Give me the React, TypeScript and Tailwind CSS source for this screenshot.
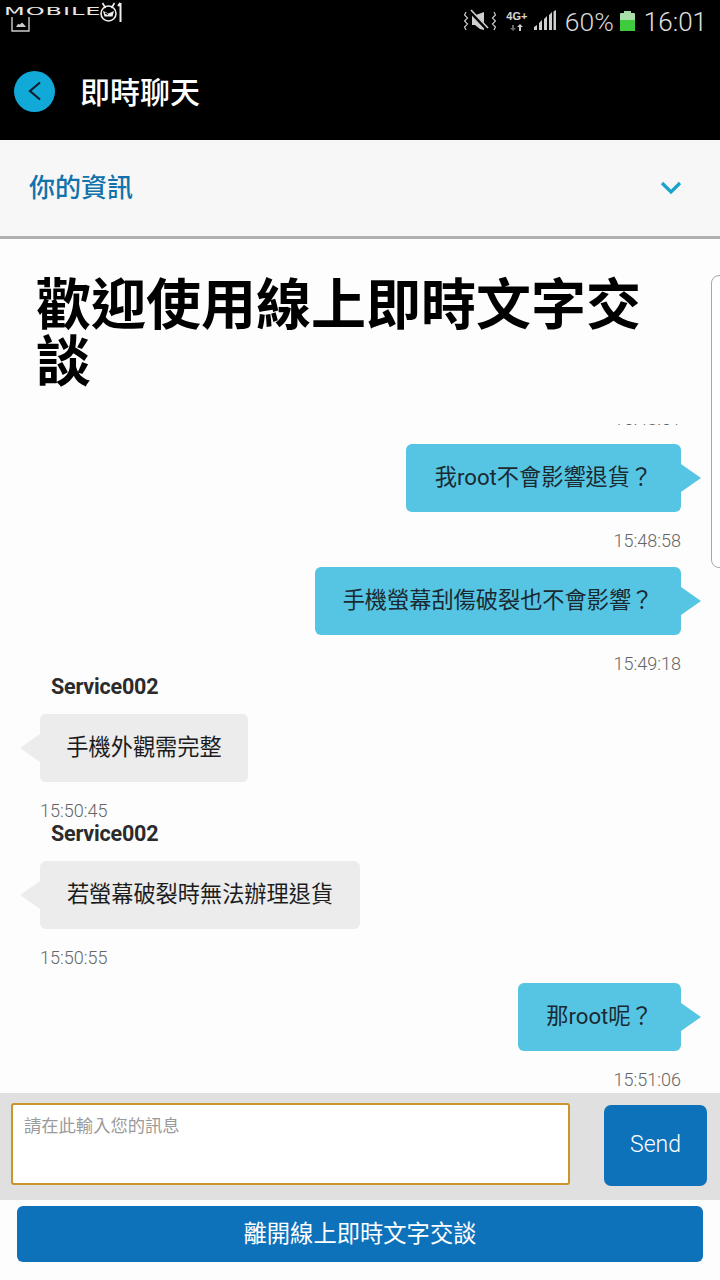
const FONT = "font-['Roboto','Noto_Sans_CJK_TC',sans-serif]";

function Time({ children, right }: { children: string; right?: boolean }) {
  return (
    <div className={`h-[18px] text-[18px] font-light leading-[18px] text-[#666666] ${right ? 'text-right' : 'text-left'}`}>
      {children}
    </div>
  );
}

function Mine({ text, width, time, gap }: { text: string; width: string; time: string; gap: string }) {
  return (
    <div className="pl-[40px] pr-[39px]">
      <div className="flex justify-end">
        <div className={`relative flex h-[68px] items-center justify-center rounded-[6px] bg-[#56c5e4] text-[22.2px] text-[#1a2a30] ${width}`}>
          {text}
          <div className="absolute left-full top-[20px] h-0 w-0 border-y-[14px] border-l-[20px] border-y-transparent border-l-[#56c5e4]" />
        </div>
      </div>
      <div className={`mt-[20px] ${gap}`}>
        <Time right>{time}</Time>
      </div>
    </div>
  );
}

function Theirs({ text, width, time, gap }: { text: string; width: string; time: string; gap: string }) {
  return (
    <div className="pl-[40px] pr-[39px]">
      <div className="ml-[11px] h-[22px] text-[21.5px] font-bold leading-[22px] tracking-[-0.2px] text-[#2b2b2b]">Service002</div>
      <div className={`relative mt-[16px] flex h-[68px] items-center justify-center rounded-[6px] bg-[#ececec] text-[22.2px] text-[#1c1c1c] ${width}`}>
        {text}
        <div className="absolute right-full top-[20px] h-0 w-0 border-y-[14px] border-r-[20px] border-y-transparent border-r-[#ececec]" />
      </div>
      <div className={`mt-[20px] ${gap}`}>
        <Time>{time}</Time>
      </div>
    </div>
  );
}

function StatusBar() {
  return (
    <div className="flex h-[44px] items-start justify-between pl-[4px] pr-[13px]">
      {/* logo */}
      <div className="flex flex-col items-start">
        <div className="flex items-start">
          <span className="mt-[6px] block w-[96px] origin-left scale-x-[2.4] font-['DejaVu_Sans',sans-serif] text-[10px] leading-[12px] tracking-[0.4px] text-[#e8e8e8]">MOBILE</span>
          <svg width="24" height="24" viewBox="0 0 24 24" className="mt-[1px]">
            <circle cx="8.500" cy="12.500" r="7.500" fill="none" stroke="#eee" strokeWidth="1.600" />
            <path d="M2.500 2l3 5M14.500 2l-3 5" stroke="#eee" strokeWidth="1.600" />
            <path d="M3 10l5.500 2.500L14 10l-1.500 5.500h-8z" fill="#eee" />
            <path d="M5 12l3 1.500" stroke="#000" strokeWidth="1.200" />
            <path d="M20.500 2v19M18 5l2.500-3" stroke="#eee" strokeWidth="2" fill="none" />
          </svg>
        </div>
        <svg width="20" height="15" viewBox="0 0 20 15" className="ml-[7px] -mt-[8px]">
          <path d="M1 0v14h17V0" fill="none" stroke="#ccc" strokeWidth="1.400" />
          <path d="M5 10l2-3 2 .5 2-2 2 2 2 2.500z" fill="#ccc" />
        </svg>
      </div>
      {/* status icons */}
      <div className="flex items-start text-[#d4d4d4]">
        <svg width="32" height="24" viewBox="0 0 32 24" className="mt-[9px]">
          <path d="M8 6h4l8-3v18l-4-1-5-4H8z" fill="#cfcfcf" />
          <path d="M7 3l17 18" stroke="#000" strokeWidth="3.500" />
          <path d="M7 1l17 18" stroke="#cfcfcf" strokeWidth="1.600" />
          <path d="M2 3L0.500 6l3 3-3 3 3 3-3 3L2 21M30 3l1.500 3-3 3 3 3-3 3 3 3L30 21" fill="none" stroke="#cfcfcf" strokeWidth="1.200" />
        </svg>
        <div className="ml-[9px] mt-[11px] flex w-[24px] flex-col items-center">
          <span className="font-['Liberation_Sans',sans-serif] text-[11px] font-bold leading-[11px] text-[#d8d8d8]">4G+</span>
          <svg width="14" height="8" viewBox="0 0 14 8" className="mt-[2px]">
            <path d="M3 7L0 4h2V1h2v3h2z" fill="#666" />
            <path d="M10 0l3 3h-2v4H9V3H7z" fill="#ccc" />
          </svg>
        </div>
        <svg width="24" height="22" viewBox="0 0 24 22" className="ml-[4px] mt-[9px]">
          <path d="M1 21v-3l3-2v5zM6 21v-7l3-3v10zM11 21V10l3-3v14zM16 21V6l3-3v18zM20.500 21V2.500L23 1v20z" fill="#cfcfcf" />
        </svg>
        <span className="ml-[8px] mt-[7px] text-[26.500px] font-light leading-[30px] text-[#d8d8d8]">60%</span>
        <div className="ml-[6px] mt-[11px] flex w-[15px] flex-col items-center">
          <div className="h-[2px] w-[7px] bg-[#a5dca5]" />
          <div className="flex h-[18px] w-[15px] flex-col rounded-[1px] bg-[#a9dfa9]">
            <div className="mt-[7px] flex-1 bg-[#3ecb3e]" />
          </div>
        </div>
        <span className="ml-[9px] mt-[7px] text-[26px] font-light leading-[30px] text-[#e0e0e0]">16:01</span>
      </div>
    </div>
  );
}

export default function App() {
  return (
    <div className={`relative flex h-[1280px] w-[720px] flex-col overflow-hidden bg-[#fdfdfd] ${FONT}`}>
      {/* top bar */}
      <div className="h-[140px] shrink-0 bg-black">
        <StatusBar />
        <div className="mt-[25px] flex items-center pl-[14px]">
          <div className="flex h-[41px] w-[41px] items-center justify-center rounded-full bg-[#11a9d8]">
            <svg width="18" height="24" viewBox="0 0 18 24">
              <path d="M14 3.500L4 12l10 8.500" fill="none" stroke="#10202a" strokeWidth="2.200" />
            </svg>
          </div>
          <span className="ml-[25px] mt-[3px] text-[30px] font-medium leading-[41px] text-white">即時聊天</span>
        </div>
      </div>

      {/* your info */}
      <div className="flex h-[99px] shrink-0 items-center justify-between border-b-[3px] border-[#b0b0b0] bg-[#f7f7f7] pb-[1px] pl-[29px] pr-[38px]">
        <span className="mt-[2px] text-[26px] font-medium text-[#1272ab]">你的資訊</span>
        <svg width="22" height="14" viewBox="0 0 22 14">
          <path d="M2 2l9 9 9-9" fill="none" stroke="#1aa3cc" strokeWidth="3.200" />
        </svg>
      </div>

      {/* heading */}
      <div className="h-[185px] shrink-0 pl-[36px] pr-[60px] pt-[38px]">
        <h1 className="text-[55px] font-bold leading-[57px] text-black">歡迎使用線上即時文字交談</h1>
      </div>

      {/* messages, pinned to the bottom like a scrolled log */}
      <div className="flex min-h-0 flex-1 flex-col justify-end overflow-hidden">
        <div className="mb-[16px] pl-[40px] pr-[39px]">
          <Time right>15:48:51</Time>
        </div>
        <Mine text="我root不會影響退貨？" width="w-[275px]" time="15:48:58" gap="mb-[17px]" />
        <Mine text="手機螢幕刮傷破裂也不會影響？" width="w-[366px]" time="15:49:18" gap="mb-[3px]" />
        <Theirs text="手機外觀需完整" width="w-[208px]" time="15:50:45" gap="mb-[3px]" />
        <Theirs text="若螢幕破裂時無法辦理退貨" width="w-[320px]" time="15:50:55" gap="mb-[16px]" />
        <Mine text="那root呢？" width="w-[163px]" time="15:51:06" gap="mb-[4px]" />
      </div>

      {/* input */}
      <div className="flex h-[107px] shrink-0 items-start justify-between bg-[#e0e0e0] pl-[11px] pr-[13px] pt-[10px]">
        <div className="h-[82px] w-[559px] rounded-[3px] border-2 border-[#c8952f] bg-white px-[11px] py-[10px] text-[17.300px] leading-[22px] text-[#9a9a9a]">
          請在此輸入您的訊息
        </div>
        <div className="mt-[2px] flex h-[81px] w-[103px] items-center justify-center rounded-[7px] bg-[#0e72bb] text-[23px] font-light text-white">
          Send
        </div>
      </div>

      {/* leave */}
      <div className="h-[80px] shrink-0 px-[17px] pt-[6px]">
        <div className="flex h-[56px] items-center justify-center rounded-[6px] bg-[#0e72bb] text-[23.300px] text-white">
          離開線上即時文字交談
        </div>
      </div>

      {/* edge panel handle */}
      <div className="absolute left-[711px] top-[275px] h-[293px] w-[20px] rounded-l-[8px] border border-[#a8a8a8] bg-white" />
    </div>
  );
}
